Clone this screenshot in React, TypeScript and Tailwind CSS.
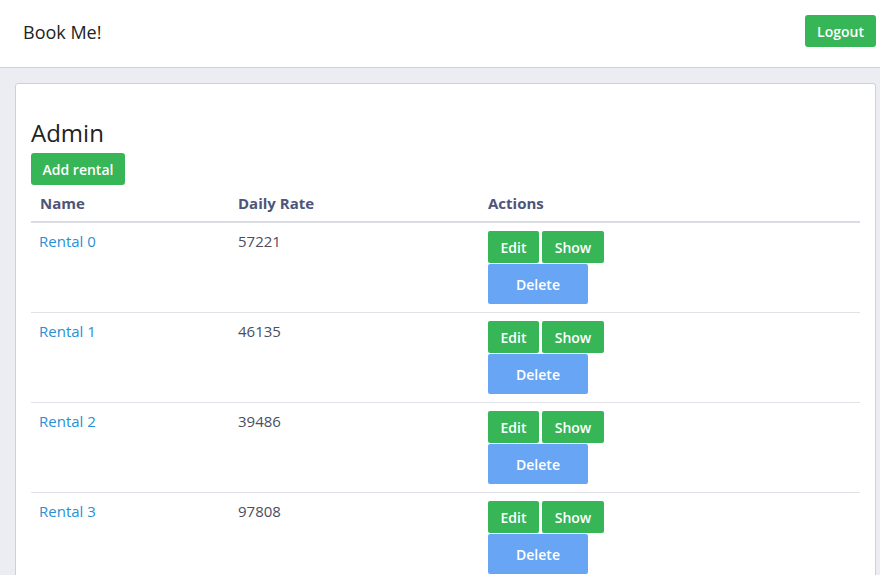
const rentals = [
  { name: "Rental 0", rate: 57221 },
  { name: "Rental 1", rate: 46135 },
  { name: "Rental 2", rate: 39486 },
  { name: "Rental 3", rate: 97808 },
];

export default function App() {
  return (
    <div className="min-h-screen bg-[#ecedf2] font-['Open_Sans',sans-serif] text-[15px]">
      {/* top bar */}
      <header className="flex h-[68px] items-center justify-between border-b border-[#cfd0d7] bg-white pl-[23px] pr-[4px]">
        <span className="pb-[3px] text-[18px] text-[#222]">Book Me!</span>
        <button className="mb-[5px] h-[32px] w-[71px] rounded-[3px] bg-[#36b657] text-[14px] font-semibold text-white">
          Logout
        </button>
      </header>

      <div className="pl-[15px] pr-[4px] pt-[15px]">
        <div className="rounded-[3px] border border-[#cfd0d7] bg-white px-[15px] pt-[34px] pb-4">
          <h2 className="text-[24px] leading-[30px] text-[#222]">Admin</h2>
          <button className="mt-[5px] h-[32px] w-[94px] rounded-[3px] bg-[#36b657] text-[14px] font-semibold text-white">
            Add rental
          </button>

          <table className="w-full border-collapse text-left">
            <thead>
              <tr className="border-b-2 border-[#dadbe3] text-[#4e5579]">
                <th className="w-[199px] pl-[9px] pt-[7px] pb-[7px] font-bold leading-[22px]">Name</th>
                <th className="w-[250px] pl-2 pt-[7px] pb-[7px] font-bold leading-[22px]">Daily Rate</th>
                <th className="pl-2 pt-[7px] pb-[7px] font-bold leading-[22px]">Actions</th>
              </tr>
            </thead>
            <tbody>
              {rentals.map((r) => (
                <tr key={r.name} className="border-b border-[#e1e1e8] align-top">
                  <td className="pl-2 pt-[7px] pb-2 leading-[22px]">
                    <a className="text-[#2a8fd4]">{r.name}</a>
                  </td>
                  <td className="pl-2 pt-[7px] pb-2 leading-[22px] text-[#4a4d63]">{r.rate}</td>
                  <td className="pl-2 py-2 text-[14px]">
                    <div className="flex gap-[3px]">
                      <button className="h-[32px] w-[51px] rounded-[2px] bg-[#36b657] font-semibold text-white">Edit</button>
                      <button className="h-[32px] w-[62px] rounded-[2px] bg-[#36b657] font-semibold text-white">Show</button>
                    </div>
                    <button className="mt-[1px] h-[40px] w-[100px] rounded-[2px] bg-[#68a6f5] font-semibold text-white">
                      Delete
                    </button>
                  </td>
                </tr>
              ))}
            </tbody>
          </table>
        </div>
      </div>
    </div>
  );
}
